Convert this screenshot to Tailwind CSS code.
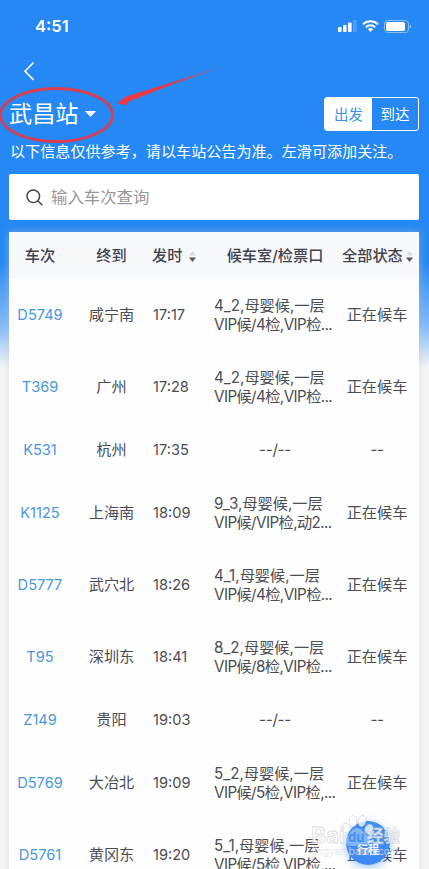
<!DOCTYPE html>
<html lang="zh-CN">
<head>
    <meta charset="UTF-8">
    <meta name="viewport" content="width=device-width, initial-scale=1.0">
    <title>武昌站 - 车站大屏</title>
    <script src="https://cdn.jsdelivr.net/npm/@tailwindcss/browser@4"></script>
</head>
<body class="h-screen overflow-hidden bg-[#f6f6f6] font-['Inter','Noto_Sans_CJK_SC',sans-serif] text-[15.2px] text-[#4b4d55]">

    <div class="relative h-[869px] w-[429px] overflow-hidden bg-linear-to-b from-[#2588f4] from-[262px] via-[#7fb9f8] via-[325px] to-[#f6f6f6] to-[368px]">

        <!-- Status bar -->
        <div class="flex h-[52px] items-center justify-between pl-[35px] pr-[17px] text-white">
            <span class="text-[16.5px] font-semibold">4:51</span>
            <div class="flex items-center gap-[5px]">
                <svg class="h-3 w-[19px]" viewBox="0 0 19 12" fill="currentColor">
                    <rect x="0" y="7" width="3.6" height="5" rx="1"/>
                    <rect x="5" y="5" width="3.6" height="7" rx="1"/>
                    <rect x="10" y="2.5" width="3.6" height="9.5" rx="1"/>
                    <rect x="15" y="0" width="3.6" height="12" rx="1" opacity=".2"/>
                </svg>
                <svg class="h-3 w-[17px]" viewBox="0 0 17 12" fill="none" stroke="currentColor" stroke-width="2">
                    <path d="M1 4.4a10.8 10.8 0 0 1 15 0"/>
                    <path d="M3.8 7.2a6.8 6.8 0 0 1 9.4 0"/>
                    <path d="M8.5 12 5.9 9.2a3.8 3.8 0 0 1 5.2 0z" fill="currentColor" stroke="none"/>
                </svg>
                <svg class="h-[13px] w-[28px]" viewBox="0 0 28 13">
                    <rect x=".5" y=".5" width="24" height="12" rx="3.2" fill="none" stroke="#fff" stroke-opacity=".45"/>
                    <rect x="2" y="2" width="19" height="9" rx="1.8" fill="#fff"/>
                    <path d="M26 4.5v4c1.6-.7 1.6-3.3 0-4z" fill="#fff" fill-opacity=".5"/>
                </svg>
            </div>
        </div>

        <!-- Back -->
        <div class="flex h-[38px] items-center pl-[23px]">
            <svg class="h-5 w-3" viewBox="0 0 12 20" fill="none" stroke="#fff" stroke-width="1.6">
                <path d="M10.5 1.5 2 10.3l8.5 8.6"/>
            </svg>
        </div>

        <!-- Station and direction switch -->
        <div class="flex h-[48px] items-center justify-between pl-[9px] pr-[10px] text-white">
            <div class="flex items-center gap-[6px]">
                <span class="text-[23.2px] leading-[32px]">武昌站</span>
                <svg class="h-[6px] w-[11px]" viewBox="0 0 11 6" fill="currentColor"><path d="M0 0h11L5.5 6z"/></svg>
            </div>
            <div class="flex h-[34px] w-[95px] overflow-hidden rounded-[3px] border border-white text-[14.5px] leading-[33px]">
                <span class="w-[47px] bg-white text-center text-[#3d92e6]">出发</span>
                <span class="flex-1 text-center">到达</span>
            </div>
        </div>

        <p class="h-[36px] pl-[10px] text-[15.1px] leading-[27px] whitespace-nowrap text-white">以下信息仅供参考，请以车站公告为准。左滑可添加关注。</p>

        <!-- Search -->
        <div class="mx-[9px] flex h-[46px] w-[410px] items-center gap-[8px] rounded-[2px] bg-white pl-[17px]">
            <svg class="h-[17px] w-[17px]" viewBox="0 0 17 17" fill="none" stroke="#3b4150" stroke-width="1.4">
                <circle cx="7.3" cy="7.3" r="6.3"/>
                <path d="m11.8 11.8 4.5 4.5"/>
            </svg>
            <span class="text-[16.4px] text-[#999]">输入车次查询</span>
        </div>

        <!-- Table -->
        <div class="mx-[9px] mt-[12px] h-[660px] w-[410px] rounded-t-[2px] bg-[#fefefe] shadow-[0_0_8px_rgba(190,200,215,0.5)]">
            <div class="grid h-[47px] grid-cols-[62px_80px_58px_132px_78px] items-center bg-[#f7f8fc] pt-px font-medium whitespace-nowrap text-[#3f424d]">
                <span class="text-center">车次</span>
                <span class="pl-px text-center">终到</span>
                <span class="flex items-center gap-[7px] pl-px">发时
                    <svg class="mt-[2px] h-[11px] w-[7px] shrink-0" viewBox="0 0 7 11"><path d="M0 4.5h7L3.5 0z" fill="#dcdde2"/><path d="M0 6.5h7L3.5 11z" fill="#555861"/></svg>
                </span>
                <span class="text-center">候车室/检票口</span>
                <span class="flex items-center gap-[3px] pl-[1px]">全部状态
                    <svg class="mt-[2px] h-[11px] w-[7px] shrink-0" viewBox="0 0 7 11"><path d="M0 4.5h7L3.5 0z" fill="#dcdde2"/><path d="M0 6.5h7L3.5 11z" fill="#555861"/></svg>
                </span>
            </div>
            <div id="rows"></div>
        </div>

        <!-- Floating trip button -->
        <div class="absolute top-[821px] left-[346px] flex h-[44px] w-[44px] items-center justify-center rounded-full bg-linear-to-b from-[#3f8fe8] to-[#3f88f5] pt-[14px] text-[11px] font-bold text-white shadow-[0_2px_8px_rgba(49,135,238,0.5)]">行程</div>

        <!-- Watermark -->
        <svg class="absolute top-[810px] left-[300px] h-[59px] w-[129px]" viewBox="0 0 129 59" font-family="Inter, 'Noto Sans CJK SC', sans-serif">
            <g fill="#fff" fill-opacity=".75" stroke="#c4c6ca" stroke-opacity=".6" stroke-width=".8">
                <ellipse cx="46" cy="18" rx="4" ry="5" transform="rotate(-20 46 18)"/>
                <ellipse cx="53" cy="11" rx="3.8" ry="5.5"/>
                <ellipse cx="62" cy="11" rx="3.8" ry="5.5" transform="rotate(12 62 11)"/>
                <ellipse cx="69" cy="19" rx="4" ry="5" transform="rotate(30 69 19)"/>
                <text x="11" y="33" font-size="21" font-weight="600" textLength="34" lengthAdjust="spacingAndGlyphs">Bai</text>
                <text x="67" y="32" font-size="16.5" font-weight="700">经验</text>
            </g>
            <path d="M57 18c-5 0-6 5-10 8-4 4-2 10 4 10 4 0 8-1 13 0 6 0 8-6 4-10-4-3-6-8-11-8z" fill="#fff" fill-opacity=".35"/>
            <text x="48" y="32" font-size="13" font-weight="700" fill="#3187ee" fill-opacity=".8">du</text>
            <text x="12" y="45" font-size="10" fill="#fff" fill-opacity=".5" stroke="#c4c6ca" stroke-opacity=".4" stroke-width=".4">jingyan.baidu.com</text>
        </svg>

        <!-- Hand-drawn marks around the station name -->
        <svg class="absolute top-[60px] left-0 h-[90px] w-[225px]" viewBox="0 60 225 90">
            <ellipse cx="56.5" cy="115" rx="56" ry="26.5" fill="none" stroke="#dc3e50" stroke-width="2.8"/>
            <path d="M117 103.5 126 96.5 170 83 218 68 172 84.5 128 102 127 105z" fill="#ed3946"/>
        </svg>
    </div>

    <script>
        const trains = [
            ['D5749', '咸宁南', '17:17', ['4_2,母婴候,一层', 'VIP候/4检,VIP检...']],
            ['T369', '广州', '17:28', ['4_2,母婴候,一层', 'VIP候/4检,VIP检...']],
            ['K531', '杭州', '17:35', null],
            ['K1125', '上海南', '18:09', ['9_3,母婴候,一层', 'VIP候/VIP检,动2...']],
            ['D5777', '武穴北', '18:26', ['4_1,母婴候,一层', 'VIP候/4检,VIP检...']],
            ['T95', '深圳东', '18:41', ['8_2,母婴候,一层', 'VIP候/8检,VIP检...']],
            ['Z149', '贵阳', '19:03', null],
            ['D5769', '大冶北', '19:09', ['5_2,母婴候,一层', 'VIP候/5检,VIP检,...']],
            ['D5761', '黄冈东', '19:20', ['5_1,母婴候,一层', 'VIP候/5检,VIP检,...']],
        ];

        document.getElementById('rows').innerHTML = trains.map(([no, dest, time, room]) => `
            <div class="grid grid-cols-[62px_80px_58px_132px_78px] items-center pt-px whitespace-nowrap ${room ? 'h-[72px]' : 'h-[54px]'}">
                <span class="text-center text-[14.6px] text-[#4a98dc]">${no}</span>
                <span class="pl-px text-center">${dest}</span>
                <span class="pl-[2px] text-[14.6px]">${time}</span>
                ${room
                    ? `<span class="pl-[5px] leading-[18.5px]">${room[0]}<br><span class="tracking-[-0.58px]">${room[1]}</span></span>`
                    : '<span class="text-center tracking-[-0.3px]">--/--</span>'}
                <span class="pr-[6px] text-center">${room ? '正在候车' : '<span class="tracking-[-0.5px]">--</span>'}</span>
            </div>
        `).join('');
    </script>
</body>
</html>
